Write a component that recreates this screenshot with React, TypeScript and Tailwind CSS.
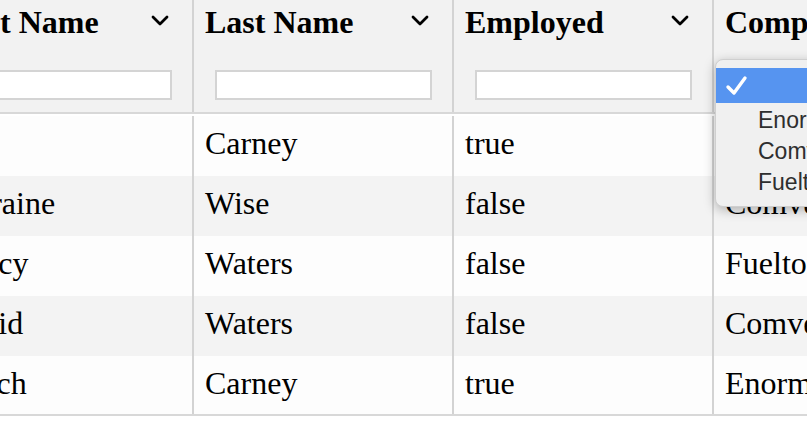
import React from "react";

const cols = ["First Name", "Last Name", "Employed", "Company"];
const rows = [
  ["Eva", "Carney", "true", "Enormo"],
  ["Lorraine", "Wise", "false", "Comveyer"],
  ["Nancy", "Waters", "false", "Fuelton"],
  ["David", "Waters", "false", "Comveyer"],
  ["Enoch", "Carney", "true", "Enormo"],
];

function Chevron() {
  return (
    <svg width="18" height="12" viewBox="0 0 18 12" className="mt-[11px] mr-[23px] shrink-0">
      <polyline points="2,2 9,9 16,2" fill="none" stroke="#000" strokeWidth="2.8" strokeLinecap="round" strokeLinejoin="round" />
    </svg>
  );
}

export default function App() {
  return (
    <div className="relative w-[807px] h-[424px] overflow-hidden bg-white" style={{ fontFamily: '"Liberation Serif", "Times New Roman", serif' }}>
      <div className="ml-[-66px] w-[1040px]">
        <div className="flex h-[114px] bg-[#f2f2f2] border-b-2 border-[#d8d8d8]">
          {cols.map((c, i) => (
            <div key={c} className={`w-[260px] shrink-0 pt-[4px] ${i < 3 ? "border-r-2 border-[#d3d3d3]" : ""}`}>
              <div className="flex h-[36px] items-start">
                <div className="flex-1 pl-[11px] text-[32px] leading-[36px] font-bold text-black whitespace-nowrap">{c}</div>
                <Chevron />
              </div>
              {i < 3 && <div className="mt-[30px] ml-[21px] w-[217px] h-[30px] border-2 border-[#d4d4d4] bg-white" />}
            </div>
          ))}
        </div>
        <div className="pt-[2px] bg-white border-b-2 border-[#d8d8d8]">
          {rows.map((r, ri) => (
            <div key={ri} className={`flex ${ri === 4 ? "h-[58px]" : "h-[60px]"} ${ri % 2 === 1 ? "bg-[#f3f3f3]" : "bg-[#fdfdfd]"}`}>
              {r.map((v, ci) => (
                <div key={ci} className={`w-[260px] shrink-0 flex items-center pl-[11px] text-[32px] leading-[36px] text-black whitespace-nowrap ${ci < 3 ? "border-r-2 border-[#d3d3d3]" : ""} ${ri === 4 ? "pb-[4px]" : "pb-[6px]"}`}>
                  {v}
                </div>
              ))}
            </div>
          ))}
        </div>
      </div>

      <div
        className="absolute left-[715px] top-[59px] w-[130px] h-[148px] rounded-[8px] bg-[#f0f0f0] border border-[#cfcfcf] shadow-[0_3px_12px_rgba(0,0,0,0.28)] pt-[8px]"
        style={{ fontFamily: '"Liberation Sans", Helvetica, Arial, sans-serif' }}
      >
        <div className="relative h-[35px] bg-[#5694f0]">
          <svg width="24" height="24" viewBox="0 0 24 24" className="absolute left-[9px] top-[6px]">
            <polyline points="3,13 9,19 20,4" fill="none" stroke="#fff" strokeWidth="3.4" strokeLinecap="round" strokeLinejoin="round" />
          </svg>
        </div>
        <div className="mt-[2px]">
          {["Enormo", "Comveyer", "Fuelton"].map((o) => (
            <div key={o} className="h-[31px] flex items-center pl-[42px] text-[23px] text-[#2e2e2e] whitespace-nowrap">
              {o}
            </div>
          ))}
        </div>
      </div>
    </div>
  );
}
